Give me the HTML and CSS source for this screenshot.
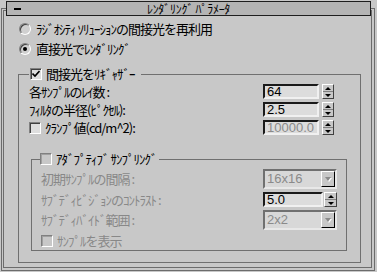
FILE: index.html
```html
<!DOCTYPE html>
<html lang="ja">
<head>
    <meta charset="UTF-8">
    <title>ﾚﾝﾀﾞﾘﾝｸﾞ ﾊﾟﾗﾒｰﾀ</title>
    <link rel="stylesheet" href="styles.css">
</head>
<body>
    <div class="rollout">
        <div class="rollout-inner">
            <div class="title-bar">
                <span class="collapse"></span>
                <span class="title">ﾚﾝﾀﾞﾘﾝｸﾞ ﾊﾟﾗﾒｰﾀ</span>
            </div>

            <div class="radio-row"><span class="radio"></span>ﾗｼﾞｵｼﾃｨ ｿﾘｭｰｼｮﾝの間接光を再利用</div>
            <div class="radio-row"><span class="radio checked"></span>直接光でﾚﾝﾀﾞﾘﾝｸﾞ</div>

            <fieldset class="group regather">
                <legend>
                    <span class="check on">
                        <svg width="8" height="8" viewBox="0 0 8 8"><path d="M0.5 3.5 L3 6 L7.5 1" fill="none" stroke="#000" stroke-width="1.6"/></svg>
                    </span>
                    間接光をﾘｷﾞｬｻﾞｰ
                </legend>

                <div class="row">
                    <span class="label">各ｻﾝﾌﾟﾙのﾚｲ数 :</span>
                    <span class="edit">64</span>
                    <span class="spinner"><i class="up"></i><i class="down"></i></span>
                </div>
                <div class="row">
                    <span class="label">ﾌｨﾙﾀの半径(ﾋﾟｸｾﾙ):</span>
                    <span class="edit">2.5</span>
                    <span class="spinner"><i class="up"></i><i class="down"></i></span>
                </div>
                <div class="row">
                    <span class="label"><span class="check"></span>ｸﾗﾝﾌﾟ値(cd/m^2):</span>
                    <span class="edit disabled">10000.0</span>
                    <span class="spinner"><i class="up"></i><i class="down"></i></span>
                </div>

                <fieldset class="group adaptive">
                    <legend><span class="check off"></span>ｱﾀﾞﾌﾟﾃｨﾌﾞ ｻﾝﾌﾟﾘﾝｸﾞ</legend>

                    <div class="row tall">
                        <span class="label dim">初期ｻﾝﾌﾟﾙの間隔 :</span>
                        <span class="combo"><span class="value">16x16</span><span class="drop"><i></i></span></span>
                    </div>
                    <div class="row">
                        <span class="label dim">ｻﾌﾞﾃﾞｨﾋﾞｼﾞｮﾝのｺﾝﾄﾗｽﾄ :</span>
                        <span class="edit wide">5.0</span>
                        <span class="spinner"><i class="up"></i><i class="down"></i></span>
                    </div>
                    <div class="row tall">
                        <span class="label dim">ｻﾌﾞﾃﾞｨﾊﾞｲﾄﾞ範囲 :</span>
                        <span class="combo"><span class="value">2x2</span><span class="drop"><i></i></span></span>
                    </div>
                    <div class="row">
                        <span class="label dim"><span class="check off"></span>ｻﾝﾌﾟﾙを表示</span>
                    </div>
                </fieldset>
            </fieldset>
        </div>
    </div>
</body>
</html>
```

FILE: styles.css
```css
* {
    box-sizing: border-box;
}

body {
    margin: 0;
    background: #c8c8c8;
    color: #000;
    font-family: "Noto Sans CJK JP", sans-serif;
    font-size: 13px;
    letter-spacing: -1px;
    line-height: 14px;
}

/* rollout frame */
.rollout {
    margin: 8px 2px 0 1px;
    height: 263px;
    padding: 1px 2px 2px 1px;
    border: 1px solid #6c6c6c;
}

.rollout-inner {
    height: 100%;
    border: 1px solid #6c6c6c;
}

.title-bar {
    display: grid;
    grid-template-columns: 1fr auto 1fr;
    align-items: center;
    width: 365px;
    height: 15px;
    margin: -10px 0 0 2px;
    background: #b4b4b4;
    border: 1px solid #1e1e1e;
}

.collapse {
    width: 7px;
    height: 2px;
    margin-left: 7px;
    background: #000;
}

.title {
    font-size: 12px;
    letter-spacing: -0.3px;
}

/* radios */
.radio-row {
    display: flex;
    align-items: center;
    height: 14px;
    margin: 6px 0 0 15px;
}

.radio {
    width: 12px;
    height: 12px;
    margin-right: 5px;
    border-radius: 50%;
    border: 1px solid;
    border-color: #808080 #fff #fff #808080;
    background: #d0d0d0;
    box-shadow: inset 1px 1px 0 #404040;
    display: flex;
    align-items: center;
    justify-content: center;
}

.radio.checked::after {
    content: "";
    width: 4px;
    height: 4px;
    border-radius: 50%;
    background: #000;
}

/* group boxes */
.group {
    min-width: 0;
    margin: 0;
    border: 1px solid #707070;
}

.group legend {
    display: flex;
    align-items: center;
    height: 14px;
    padding: 0 6px 0 1px;
}

.regather {
    margin: 11px 10px 0 14px;
    padding: 0 26px 11px 10px;
}

.adaptive {
    margin: 17px -13px 0 2px;
    padding: 0 9px 2px 9px;
}

.adaptive legend {
    margin-left: -1px;
    padding: 0 3px 0 0;
}

/* checkboxes */
.check {
    display: inline-flex;
    align-items: center;
    justify-content: center;
    width: 12px;
    height: 12px;
    margin-right: 4px;
    border: 1px solid;
    border-color: #808080 #fff #fff #808080;
    background: #dedede;
    box-shadow: inset 1px 1px 0 #404040;
}

.check.off {
    background: #c8c8c8;
    box-shadow: inset 1px 1px 0 #a0a0a0;
}

/* parameter rows */
.row {
    display: flex;
    align-items: center;
    height: 15px;
    margin-top: 3px;
}

.row.tall {
    height: 20px;
}

.label {
    flex: 1;
    display: flex;
    align-items: center;
    white-space: nowrap;
}

.label.dim {
    color: #888;
}

.edit {
    width: 56px;
    height: 15px;
    padding-left: 2px;
    border: 2px solid;
    border-color: #1a1a1a #f0f0f0 #f0f0f0 #1a1a1a;
    background: #dcdcdc;
    font-family: "Liberation Sans", sans-serif;
    font-size: 13px;
    letter-spacing: 0;
    line-height: 11px;
}

.edit.wide {
    width: 60px;
}

.edit.disabled {
    color: #8a8a8a;
}

.spinner {
    display: flex;
    flex-direction: column;
    width: 12px;
    height: 15px;
    margin-left: 3px;
    border: 1px solid;
    border-color: #fff #404040 #404040 #fff;
    background: #c8c8c8;
}

.adaptive .spinner {
    width: 13px;
    margin-left: 1px;
}

.spinner i {
    flex: 1;
    display: flex;
    align-items: center;
    justify-content: center;
}

.spinner .up {
    border-bottom: 1px solid #808080;
}

.spinner .up::after,
.spinner .down::after {
    content: "";
    border-left: 3px solid transparent;
    border-right: 3px solid transparent;
}

.spinner .up::after {
    border-bottom: 3px solid #000;
}

.spinner .down::after {
    border-top: 3px solid #000;
}

/* drop-down lists */
.combo {
    display: flex;
    width: 74px;
    height: 20px;
    border: 2px solid;
    border-color: #707070 #e8e8e8 #e8e8e8 #707070;
    background: #d8d8d8;
}

.combo .value {
    flex: 1;
    padding: 1px 0 0 2px;
    color: #8a8a8a;
    font-family: "Liberation Sans", sans-serif;
    font-size: 13px;
    letter-spacing: 0;
    line-height: 14px;
}

.combo .drop {
    display: flex;
    align-items: center;
    justify-content: center;
    width: 14px;
    border: 1px solid;
    border-color: #fff #000 #000 #fff;
    background: #c8c8c8;
}

.combo .drop i {
    border-left: 3px solid transparent;
    border-right: 3px solid transparent;
    border-top: 4px solid #8a8a8a;
    filter: drop-shadow(1px 1px 0 #fff);
}
```
